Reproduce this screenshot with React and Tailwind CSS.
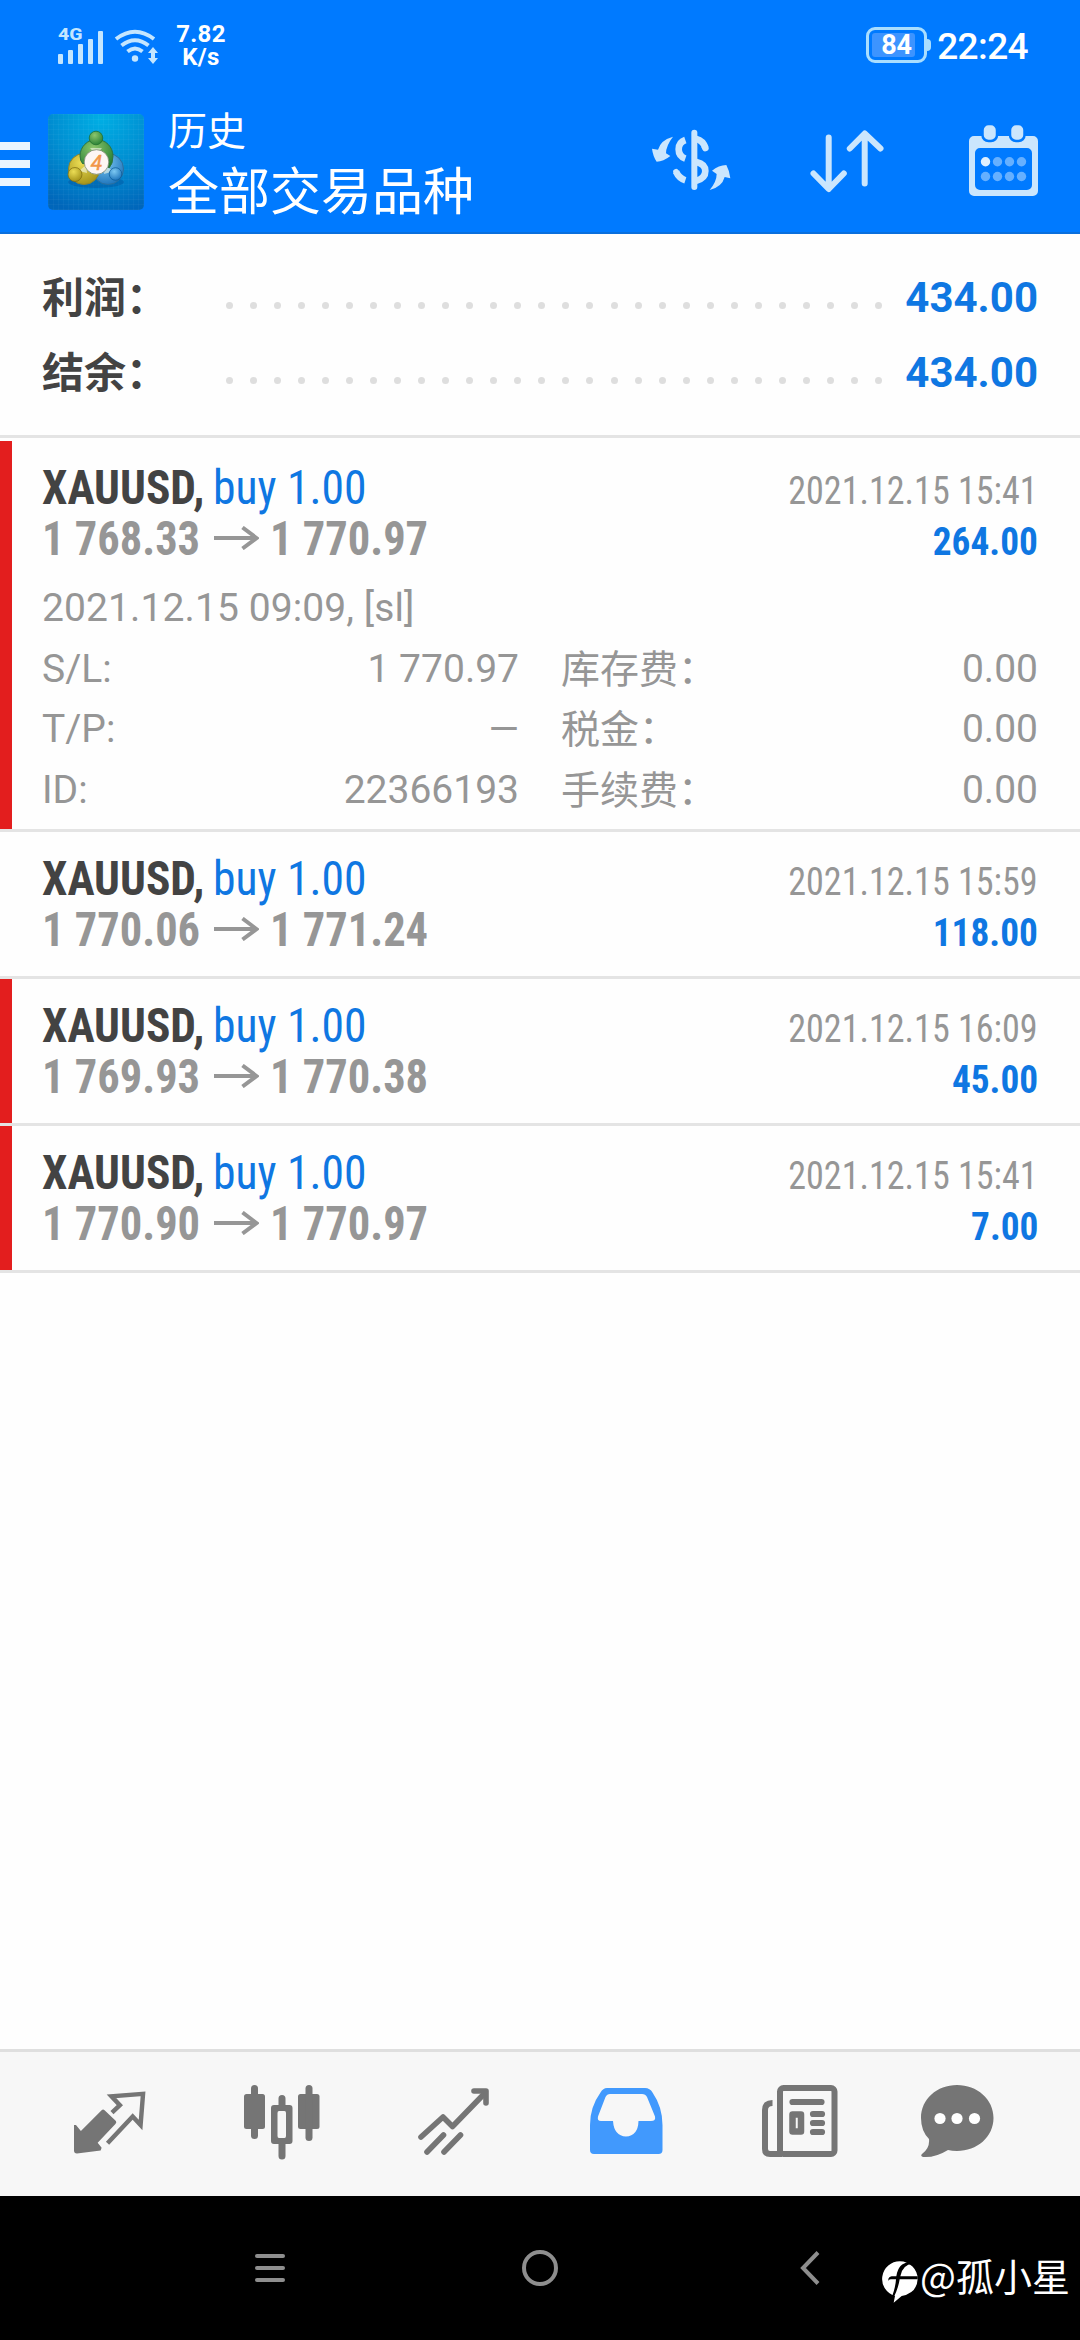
import React from 'react'

const SUMMARY = [
  { label: '利润：', value: '434.00' },
  { label: '结余：', value: '434.00' },
]

const DEALS = [
  {
    symbol: 'XAUUSD,', side: 'buy 1.00', open: '1 768.33', close: '1 770.97',
    time: '2021.12.15 15:41', profit: '264.00', marked: true,
    details: {
      opened: '2021.12.15 09:09, [sl]',
      rows: [
        ['S/L:', '1 770.97', '库存费：', '0.00'],
        ['T/P:', '—', '税金：', '0.00'],
        ['ID:', '22366193', '手续费：', '0.00'],
      ],
    },
  },
  { symbol: 'XAUUSD,', side: 'buy 1.00', open: '1 770.06', close: '1 771.24', time: '2021.12.15 15:59', profit: '118.00', marked: false },
  { symbol: 'XAUUSD,', side: 'buy 1.00', open: '1 769.93', close: '1 770.38', time: '2021.12.15 16:09', profit: '45.00', marked: true },
  { symbol: 'XAUUSD,', side: 'buy 1.00', open: '1 770.90', close: '1 770.97', time: '2021.12.15 15:41', profit: '7.00', marked: true },
]

function StatusBar() {
  return (
    <div className="h-[92px] flex items-start text-white">
      <svg className="ml-[57px] mt-[26px] w-[104px] h-[40px] shrink-0 overflow-visible" viewBox="0 0 104 40" fill="#c4e6ff">
        <text x="1" y="14" fontSize="17" fontWeight="800" fontFamily="Roboto" textLength="24.500" lengthAdjust="spacingAndGlyphs">4G</text>
        <rect x="1" y="28" width="5" height="10" rx="1" />
        <rect x="11" y="24" width="5" height="14" rx="1" />
        <rect x="21" y="18" width="5" height="20" rx="1" />
        <rect x="31" y="13" width="5" height="25" rx="1" />
        <rect x="41" y="5" width="5" height="33" rx="1" />
        <g fill="none" stroke="#c4e6ff" strokeWidth="4">
          <path d="M59 13 Q78 -1.500 97 13" />
          <path d="M64.500 19.500 Q78 9 91.500 19.500" />
          <path d="M70.500 25.500 Q78 19.500 85.500 25.500" />
        </g>
        <circle cx="78" cy="32.500" r="3.200" />
        <path d="M96 21l5 6h-3v5h3l-5 6-5-6h3v-5h-3z" />
      </svg>
      <div className="ml-[14px] mt-[23px] w-[52px] text-center text-[24px] leading-[23px] font-bold tracking-[0.3px]">
        <div>7.82</div>
        <div>K/s</div>
      </div>
      <div className="ml-auto mt-[27px] relative w-[61px] h-[36px] rounded-[9px] border-[3px] border-[#a9deff] p-[3px]">
        <div className="w-[43px] h-full rounded-[3px] bg-[#3d94ff]" />
        <span className="absolute inset-0 text-[27px] leading-[31px] font-bold text-center">84</span>
        <span className="absolute -right-[7px] top-[9px] w-[4px] h-[12px] rounded-r-full bg-[#a9deff]" />
      </div>
      <div className="ml-[10px] mr-[52px] mt-[25px] text-[37px] leading-[44px] font-medium tracking-[-0.6px]">22:24</div>
    </div>
  )
}

function AppLogo() {
  return (
    <svg className="w-[96px] h-[96px] shrink-0" viewBox="0 0 96 96">
      <defs>
        <radialGradient id="logoBg" cx="0.55" cy="0.05" r="1">
          <stop offset="0" stopColor="#00aee4" />
          <stop offset="0.5" stopColor="#008fd2" />
          <stop offset="1" stopColor="#0066ba" />
        </radialGradient>
        <radialGradient id="green" cx="0.4" cy="0.3" r="0.8">
          <stop offset="0" stopColor="#8cc66c" />
          <stop offset="1" stopColor="#1f7a30" />
        </radialGradient>
        <radialGradient id="yellow" cx="0.4" cy="0.3" r="0.8">
          <stop offset="0" stopColor="#ebdd55" />
          <stop offset="1" stopColor="#9c8a12" />
        </radialGradient>
        <radialGradient id="blue" cx="0.4" cy="0.3" r="0.8">
          <stop offset="0" stopColor="#7cc8f2" />
          <stop offset="1" stopColor="#146cb6" />
        </radialGradient>
        <pattern id="mesh" width="5" height="5" patternUnits="userSpaceOnUse">
          <path d="M0 0H5M0 0V5" stroke="#ffffff" strokeOpacity="0.06" />
        </pattern>
      </defs>
      <rect width="96" height="96" rx="5" fill="url(#logoBg)" />
      <rect width="96" height="96" rx="5" fill="url(#mesh)" />
      <ellipse cx="48" cy="68" rx="28" ry="6" fill="#01408a" opacity="0.3" />
      <circle cx="60" cy="55" r="15.500" fill="url(#blue)" stroke="#2a6f9f" />
      <circle cx="36" cy="55" r="15.500" fill="url(#yellow)" stroke="#8a8430" />
      <path d="M32 42a16.500 16.500 0 1 1 33 0q0 8-4 12L48 40 35 50q-3-3-3-8z" fill="url(#green)" stroke="#2f7440" />
      <path d="M42 34l12 0-6 7zM31 57l7-6 1 8zM66 57l-9-5-1 8z" fill="#f4f8e8" opacity="0.6" />
      <circle cx="48" cy="24" r="6.800" fill="url(#green)" stroke="#1d6b2a" strokeWidth="0.7" />
      <circle cx="27" cy="60.500" r="7" fill="url(#yellow)" stroke="#7c6a10" strokeWidth="0.7" />
      <circle cx="67.500" cy="60" r="6.300" fill="url(#blue)" stroke="#0a5a96" strokeWidth="0.7" />
      <circle cx="48.500" cy="48" r="12.300" fill="#fdf6f4" stroke="#7d8a75" strokeWidth="0.8" />
      <text x="48.500" y="55.500" textAnchor="middle" fontSize="21" fontStyle="italic" fontWeight="400" fontFamily="Roboto" fill="#f2964a" stroke="#f2964a" strokeWidth="0.5">4</text>
    </svg>
  )
}

function HeaderActions() {
  return (
    <div className="ml-auto mr-[42px] flex">
      <svg className="mt-[37px] w-[79px] h-[62px]" viewBox="32 42 237 186" fill="none" stroke="#cbe6fd" strokeWidth="20">
        <path d="M159 53V216" strokeWidth="18" strokeLinecap="round" />
        <path d="M132 75Q112 82 112 103 112 124 132 131" />
        <path d="M104 170Q113 190 132 196" />
        <path d="M104 170L105 172" strokeWidth="17" strokeLinecap="round" />
        <path d="M165 72Q185 77 192 98" />
        <path d="M191 97L192 99" strokeLinecap="round" />
        <path d="M165 141Q192 147 192 168 192 190 165 197" />
        <path d="M95 65Q58 75 50 104L32 101Q35 124 46 140 66 140 87 123L74 115Q74 92 95 65Z" fill="#cbe6fd" stroke="none" />
        <path d="M205 225Q242 216 250 186L267 190Q264 166 255 150 232 151 212 167L226 177Q226 200 205 225Z" fill="#cbe6fd" stroke="none" />
      </svg>
      <svg className="ml-[79px] mt-[37px] w-[74px] h-[64px]" viewBox="0 0 74 64" fill="none" stroke="#cbe6fd" strokeWidth="6" strokeLinecap="round" strokeLinejoin="round">
        <path d="M18.700 8.500V59M3.500 44.500L18.700 60 33.800 44.500" />
        <path d="M54.700 54.500V5M39.800 19.500L54.700 4.500 70.500 19.500" />
      </svg>
      <svg className="ml-[85px] mt-[33px] w-[69px] h-[71px]" viewBox="0 0 69 71">
        <path fillRule="evenodd" fill="#cbe6fd" d="M5 11H64a5 5 0 0 1 5 5V66a5 5 0 0 1-5 5H5a5 5 0 0 1-5-5V16a5 5 0 0 1 5-5ZM11 23a5 5 0 0 0-5 5V60a5 5 0 0 0 5 5H58a5 5 0 0 0 5-5V28a5 5 0 0 0-5-5Z" />
        <rect x="13.500" y="-1" width="14.500" height="17" rx="6" fill="#cbe6fd" stroke="#007aff" strokeWidth="2.500" />
        <rect x="41" y="-1" width="14.500" height="17" rx="6" fill="#cbe6fd" stroke="#007aff" strokeWidth="2.500" />
        {[36.700, 51.500].map((cy) => [16.500, 28.500, 40.500, 52.500].map((cx) => (
          <circle key={`${cx}-${cy}`} cx={cx} cy={cy} r="4.700" fill={cx < 20 && cy < 40 ? '#dff0ff' : '#66b0ff'} />
        )))}
      </svg>
    </div>
  )
}

function Header() {
  return (
    <header className="h-[234px] shrink-0 bg-[#007aff] border-b-2 border-[#0a6fdd]">
      <StatusBar />
      <div className="h-[140px] flex items-start text-white">
        <div className="mt-[50px] w-[30px] flex flex-col gap-[10px]">
          <div className="h-2 bg-[#eaf5ff]" />
          <div className="h-2 bg-[#eaf5ff]" />
          <div className="h-2 bg-[#eaf5ff]" />
        </div>
        <div className="ml-[18px] mt-[22px]"><AppLogo /></div>
        <div className="ml-[24px] mt-[14px] whitespace-nowrap">
          <div className="text-[39px] leading-[52px]">历史</div>
          <div className="mt-[2px] text-[51px] leading-[66px]">全部交易品种</div>
        </div>
        <HeaderActions />
      </div>
    </header>
  )
}

function Summary() {
  return (
    <section className="h-[204px] shrink-0 pt-[26px] px-[42px] border-b-[3px] border-[#e4e4e4] text-[42px] leading-[75px]">
      {SUMMARY.map((row) => (
        <div key={row.label} className="flex items-center h-[75px]">
          <span className="w-[184px] pt-[2px] font-bold text-[#434343]">{row.label}</span>
          <div className="w-[656px] mt-[16px] flex justify-between">
            {Array.from({ length: 28 }, (_, i) => (
              <span key={i} className="w-[7px] h-[7px] rounded-full bg-[#dedede]" />
            ))}
          </div>
          <span className="ml-auto font-bold text-[#0f77e2]">{row.value}</span>
        </div>
      ))}
    </section>
  )
}

function Deal({ deal }) {
  return (
    <div className="relative shrink-0 border-b-[3px] border-[#e4e4e4] px-[42px] py-[21px]">
      {deal.marked && <div className="absolute left-0 top-0 bottom-0 w-[12px] bg-[#e31e1e]" />}
      <div className="h-[51px] flex items-baseline leading-[51px] font-stretch-condensed whitespace-nowrap">
        <span className="w-[171px] origin-left scale-x-[0.945] text-[48px] font-bold text-[#434343]">{deal.symbol}</span>
        <span className="origin-left scale-x-[0.95] text-[48px] text-[#0f77e2]">{deal.side}</span>
        <span className="ml-auto origin-right scale-x-[0.925] text-[39px] text-[#969696]">{deal.time}</span>
      </div>
      <div className="h-[51px] flex items-baseline leading-[51px] font-stretch-condensed font-bold whitespace-nowrap">
        <span className="w-[172px] origin-left scale-x-[0.927] text-[48px] text-[#969696]">{deal.open}</span>
        <svg className="mr-[11px] -translate-y-[5px] w-[45px] h-[24px]" viewBox="0 0 45 24" fill="none" stroke="#969696" strokeWidth="4">
          <path d="M0 12H42M28.500 1.500L42.500 12 28.500 22.500" />
        </svg>
        <span className="origin-left scale-x-[0.927] text-[48px] text-[#969696]">{deal.close}</span>
        <span className="ml-auto origin-right scale-x-[0.957] text-[39px] text-[#0f77e2]">{deal.profit}</span>
      </div>
      {deal.details && (
        <div className="mt-[14px] -mb-[12px] text-[39px] leading-[60.5px] text-[#969696]">
          <div className="tracking-[0.1px]">{deal.details.opened}</div>
          {deal.details.rows.map(([a, b, c, d]) => (
            <div key={a} className="flex">
              <span className="w-[200px]">{a}</span>
              <span className="w-[277px] text-right">{b}</span>
              <span className="ml-[42px] pt-px -mb-px">{c}</span>
              <span className="ml-auto">{d}</span>
            </div>
          ))}
        </div>
      )}
    </div>
  )
}

function TabBar() {
  return (
    <nav className="h-[147px] shrink-0 border-t-[3px] border-[#dfdfdf] bg-[#f7f7f7] pt-[33px] pl-[74px] flex items-start gap-[98px] text-[#757575]">
      <svg className="w-[72px] h-[75px]" viewBox="0 0 73 75" fill="none" stroke="currentColor">
        <path d="M28 25Q29.500 23.500 31 25L42.500 36Q43.500 37.500 42 39L24 58l4 5-1 3L3 69Q0 69 0 66V40h2l5 6z" fill="currentColor" stroke="none" />
        <path d="M38.500 27.500L46.500 20 38 11 70 8.500 67.500 40 59.500 31.500 34 58.500" strokeWidth="4.500" />
      </svg>
      <svg className="w-[76px] h-[75px]" viewBox="0 0 76 75" fill="currentColor">
        <rect x="0" y="9" width="21" height="35" rx="2.500" />
        <rect x="7" y="0" width="7" height="54" rx="3.500" />
        <rect x="54" y="9" width="21.500" height="35" rx="2.500" />
        <rect x="61.500" y="0" width="7" height="56" rx="3.500" />
        <path fillRule="evenodd" d="M30 20H45.500Q48.500 20 48.500 23V56Q48.500 59 45.500 59H30Q27 59 27 56V23Q27 20 30 20ZM35 26Q33.500 26 33.500 28V51Q33.500 53 35 53H40.500Q42 53 42 51V28Q42 26 40.500 26Z" />
        <path d="M34.500 21V13.500a3.500 3.500 0 0 1 7 0V21zM34.500 58V71a3.500 3.500 0 0 0 7 0V58z" />
      </svg>
      <svg className="w-[72px] h-[75px]" viewBox="0 0 72 75" fill="none" stroke="currentColor" strokeWidth="5.600" strokeLinecap="round" strokeLinejoin="round">
        <path d="M3 52L25 32 34.500 41.500 66 9" />
        <path d="M56 6H68V18" />
        <path d="M9 67L25.500 50M26 67L42.500 50" />
      </svg>
      <svg className="ml-[2px] w-[73px] h-[75px]" viewBox="0 0 73 75">
        <path fillRule="evenodd" fill="#4199fd" d="M17 3H55Q60 3 62.500 7.500 72.500 22 72.500 40V65Q72.500 69 68.500 69H4Q0 69 0 65V40Q0 22 10.500 7.500 13 3 17 3ZM20 9Q17 9 15.500 12L8 31.500Q7 36 11 36H23Q24 51 36 51.500 48 51 48.500 36H61Q66 36 65 31.500L57 12Q55.500 9 52 9Z" />
      </svg>
      <svg className="ml-px w-[76px] h-[75px]" viewBox="0 0 76 75" fill="none" stroke="currentColor">
        <rect x="18" y="3" width="54.500" height="66" rx="3.500" strokeWidth="6" />
        <path d="M10.500 18Q3 18 3 25V64Q3 69 8 69H20" strokeWidth="6" />
        <path d="M30.500 17H59.500M51 29H60M51 38H60M51 47H60" strokeWidth="6.200" strokeLinecap="round" />
        <rect x="30.500" y="29.500" width="8.500" height="17" strokeWidth="6.500" strokeLinejoin="round" />
      </svg>
      <svg className="-ml-[15px] w-[73px] h-[75px]" viewBox="0 0 73 75" fill="currentColor">
        <path d="M36 0C56 0 72.500 14 72.500 33S56 66 36 66Q31 66 27 65 14 73 2 72-1 71 1 69 9 63 8 54 0 46 0 33C0 14 16 0 36 0z" />
        <g fill="#ffffff">
          <circle cx="19" cy="33.500" r="5.600" />
          <circle cx="36" cy="33.500" r="5.600" />
          <circle cx="53.500" cy="33.500" r="5.600" />
        </g>
      </svg>
    </nav>
  )
}

function SystemNav() {
  return (
    <div className="h-[144px] shrink-0 bg-black flex items-start text-[#8e8e8e]">
      <div className="ml-[255px] mt-[58px] w-[30px] flex flex-col gap-[8px]">
        <div className="h-1 rounded-full bg-current" />
        <div className="h-1 rounded-full bg-current" />
        <div className="h-1 rounded-full bg-current" />
      </div>
      <div className="ml-[237px] mt-[54px] w-[36px] h-[36px] rounded-full border-4 border-current" />
      <svg className="ml-[242px] mt-[55px] w-[20px] h-[34px]" viewBox="0 0 20 34" fill="none" stroke="currentColor" strokeWidth="4">
        <path d="M18 1.500L3 17 18 32.500" />
      </svg>
      <svg className="ml-[62px] mt-[65px] w-[36px] h-[42px]" viewBox="36 64 106 126">
        <path fill="#ffffff" d="M89 65A53 53 0 0 1 142 118Q140 160 94 169L70 189 74 169A53 53 0 0 1 89 65Z" />
        <path fill="#000000" d="M128 72Q96 74 90 110H142V119H88Q84 146 68 178L66 168Q76 140 77 119H62Q57 119 54 123 53 112 64 110H78Q84 70 116 68Z" />
      </svg>
      <div className="ml-[2px] mt-[51px] text-[38px] leading-[56px] text-white whitespace-nowrap font-['Noto_Sans_CJK_SC',sans-serif]">@孤小星</div>
    </div>
  )
}

export default function App() {
  return (
    <div className="w-[1080px] h-[2340px] flex flex-col overflow-hidden bg-[#fefefe] font-[Roboto,'Noto_Sans_CJK_SC',sans-serif]">
      <Header />
      <Summary />
      <main className="flex-1 pt-[3px] flex flex-col">
        {DEALS.map((deal, i) => <Deal key={i} deal={deal} />)}
      </main>
      <TabBar />
      <SystemNav />
    </div>
  )
}
